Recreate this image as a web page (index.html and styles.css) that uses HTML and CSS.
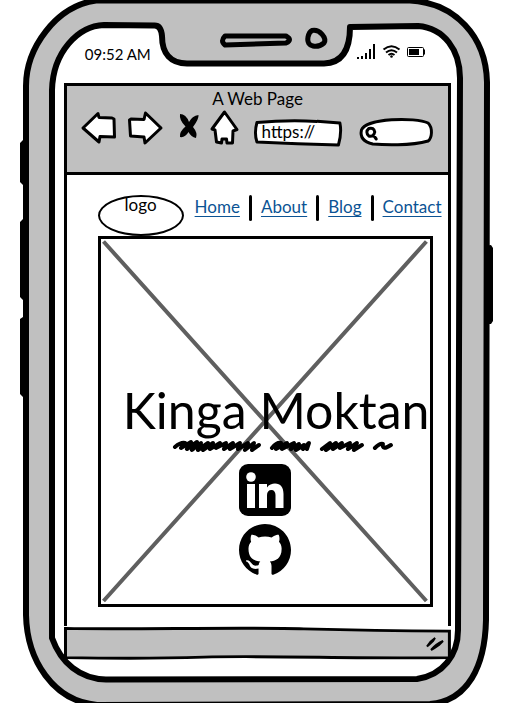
FILE: index.html
```html
<!DOCTYPE html>
<html lang="en">
<head>
<meta charset="utf-8">
<meta name="viewport" content="width=device-width, initial-scale=1">
<title>Kinga Moktan</title>
<link rel="stylesheet" href="styles.css">
</head>
<body>
<div class="phone">
  <svg class="phone-frame" viewBox="0 0 530 703" preserveAspectRatio="none" aria-hidden="true">
    <path class="side-key" d="M20 143l3-3h5v46h-4l-4-4zM20 222l3-3h5v81h-5l-3-3zM20 319l3-2h5v82l-5-2-3-3zM484 246l7-1 2 3v73l-2 3h-7z"/>
    <path class="shell" d="M96 0.500C56 6 26 48 26 86L26 615C27 660 53 701 97 705L430 704C468 701 485 666 486 620L487 82C486 36 455 3 410 0.500Z"/>
    <path class="glass" d="M52 90C53 52 78 26 104 25L154 25.500Q161 25 162 36C162 54 171 63.500 187 63.500L324 63.500C342 63 350 50 350 27L418 26C444 28 460 50 460 78L458 630C458 655 443 675 417 679L106 679.500C80 679 61 663 52 638Z"/>
    <path class="speaker" d="M225 36Q220 41 225 45L286 43Q293 40 286 36Z"/>
    <path class="speaker" d="M312 30.500C320 29 327 38 324 43C318 48 306 48 308 37Q309 32 312 30.500Z"/>
  </svg>

  <header class="status">
    <time class="clock">09:52 AM</time>
    <svg class="status-icons" viewBox="0 0 70 20" aria-label="Signal, Wi-Fi and battery">
      <path class="ink-fill" d="M0 13h2v2H0zM4 12h2v3H4zM8 9h2v6H8zM12 5h2v10h-2zM16 0h2v15h-2z"/>
      <g class="wave"><path d="M26.500 5.500Q34.500 -1 42.500 5.500M29 8.500Q34.500 4 40 8.500M31.500 11Q34.500 8.500 37.500 11"/></g>
      <circle class="ink-fill" cx="34.500" cy="12.500" r="1.300"/>
      <rect class="battery" x="50.500" y="3.500" width="16" height="9" rx="1"/>
      <path class="ink-fill" d="M52 5h10v6H52zM67 5.500h1v5h-1z"/>
    </svg>
  </header>

  <div class="browser">
    <header class="toolbar">
      <p class="page-title">A Web Page</p>
      <div class="controls">
        <button class="tool back" type="button" aria-label="Back">
          <svg viewBox="0 0 34 36"><path class="outline" d="M1 19L16 4.500L17 8.500L30 9L32 10L32.500 28L18 27.500L17 33Z"/></svg>
        </button>
        <button class="tool forward" type="button" aria-label="Forward">
          <svg viewBox="0 0 36 36"><path class="outline" d="M1.500 11L3 10L16 10.500L17.500 4L33 19L17 34L16 28L2.500 27Z"/></svg>
        </button>
        <button class="tool stop" type="button" aria-label="Stop">
          <svg viewBox="0 0 22 36"><path class="ink-fill" d="M4 5Q10 5 13 13Q16 7 22.500 6Q23 10 17 18Q22 24 20 29Q15 28 12.500 23Q9 29 4 28Q3 23 9.500 17.500Q3 11 4 5Z"/></svg>
        </button>
        <button class="tool home" type="button" aria-label="Home">
          <svg viewBox="0 0 30 36"><path class="outline" d="M14.500 3L27 20.500L23 22L22.500 34L17 34L16.500 30L12 30L11.500 34L6.500 33L5 21L2 20Z"/></svg>
        </button>
        <label class="field url-field">
          <svg viewBox="0 0 94 36" preserveAspectRatio="none" aria-hidden="true"><path class="outline" d="M5 13.500Q45 10 89 14Q91 24 87.500 36Q46 35 5 33Q2 24 5 13.500Z"/></svg>
          <input type="text" value="https://" aria-label="Address">
        </label>
        <label class="field search-field">
          <svg viewBox="0 0 78 36" preserveAspectRatio="none" aria-hidden="true"><path class="outline" d="M5.500 21C10 9 60 8 73 14C78 19 77 29 73 32C55 37 28 36 17 35C8 33 4 28 5.500 21Z"/><path class="lens" d="M13 19.500Q18 18 19 23Q18 28 13 27Q9 23 13 19.500M17.500 26L20.500 30"/></svg>
          <input type="search" aria-label="Search">
        </label>
      </div>
    </header>

    <main class="page">
      <nav class="site-nav">
        <a class="logo" href="#">logo</a>
        <ul class="links">
          <li><a href="#">Home</a></li>
          <li><a href="#">About</a></li>
          <li><a href="#">Blog</a></li>
          <li><a href="#">Contact</a></li>
        </ul>
      </nav>
      <section class="hero">
        <svg class="cross" viewBox="0 0 329 365" preserveAspectRatio="none" aria-hidden="true"><path d="M2.500 2.500L325.500 362M325.500 2.500L2.500 362"/></svg>
        <h1>Kinga Moktan</h1>
        <svg class="scribble" viewBox="0 0 329 18" aria-hidden="true">
          <path d="M74 9Q80 4 84 5L80 10L90 4L86 11L96 4L91 12L100 5L97 12L107 5L102 12L112 5L109 11L119 5L115 10L125 5L123 11L132 5L129 11L139 5L137 11L147 5L144 12L153 5L151 12L158 7M171 10Q176 4 180 5L175 11L186 5L181 11L193 5L190 11L198 6L195 12L203 7L202 11L208 5L206 11M221 11L229 5L225 12L235 5L232 11L241 5L239 10L249 5L247 11L256 5L253 12L261 7M274 10Q279 5 282 6Q281 13 290 7"/>
        </svg>
        <a class="social" href="#" aria-label="LinkedIn">
          <svg viewBox="0 0 52 52"><rect class="ink-fill" width="52" height="52" rx="9"/><circle class="paper" cx="12" cy="13" r="4.800"/><path class="paper" d="M8 20h8v24H8zM20 20h8v3.500C30 20.500 33 19.500 36 19.500C41.500 19.500 44.500 23.500 44.500 30V44H36.500V31C36.500 28 35 26 32.500 26C29.500 26 28 28 28 31V44H20z"/></svg>
        </a>
        <a class="social" href="#" aria-label="GitHub">
          <svg viewBox="0 0 16 16"><path class="ink-fill" d="M8 0C3.580 0 0 3.580 0 8c0 3.540 2.290 6.530 5.470 7.590.4.070.55-.17.55-.38 0-.19-.01-.82-.01-1.490-2.010.37-2.530-.49-2.690-.94-.09-.23-.48-.94-.82-1.130-.28-.15-.68-.52-.01-.53.63-.01 1.080.58 1.230.82.72 1.210 1.870.87 2.330.66.070-.52.28-.87.51-1.070-1.780-.2-3.640-.89-3.640-3.950 0-.87.31-1.590.82-2.150-.08-.2-.36-1.020.08-2.120 0 0 .67-.21 2.200.82.64-.18 1.320-.27 2-.27s1.360.09 2 .27c1.530-1.040 2.200-.82 2.200-.82.44 1.100.16 1.920.08 2.120.51.56.82 1.270.82 2.150 0 3.070-1.870 3.750-3.650 3.950.29.25.54.73.54 1.480 0 1.070-.01 1.930-.01 2.200 0 .21.15.46.55.38A8.010 8.010 0 0 0 16 8c0-4.420-3.580-8-8-8z"/></svg>
        </a>
      </section>
    </main>

    <footer class="bottom-bar">
      <svg class="bar-shape" viewBox="0 0 387 36" preserveAspectRatio="none" aria-hidden="true"><path d="M1.500 2.500C60 4 180 1 240 3Q310 5 385.500 5.500V33.500C300 35 200 31 140 33Q80 35 1.500 33.500Z"/></svg>
      <svg class="grip" viewBox="0 0 20 16" aria-hidden="true"><path d="M2 10.500Q5 5 10 2L8 5Q5 8 2 10.500M6 14Q11 8 18 5L14 9Q10 12 6 14"/></svg>
    </footer>
  </div>
</div>
</body>
</html>
```
FILE: styles.css
```css
* { box-sizing: border-box; }

body {
  margin: 0;
  background: #fff;
  color: #000;
  font-family: Lato, "Noto Sans", sans-serif;
  font-size: 17px;
  line-height: 20px;
  overflow-x: hidden;
}

svg { display: block; overflow: visible; }
.ink-fill { fill: #000; }
.paper { fill: #fff; }
.outline { fill: #fff; stroke: #000; stroke-width: 3; stroke-linejoin: round; }

.phone {
  position: relative;
  max-width: 530px;
  padding-bottom: 43px;
  overflow: hidden;
}
.phone-frame {
  position: absolute;
  inset: 0;
  width: 100%;
  height: 100%;
  z-index: -1;
}
.shell { fill: #c0c0c0; stroke: #000; stroke-width: 6; }
.glass { fill: #fff; stroke: #000; stroke-width: 6; stroke-linejoin: round; }
.side-key { fill: #000; }
.speaker { fill: #c0c0c0; stroke: #000; stroke-width: 5; stroke-linejoin: round; }

.status {
  display: flex;
  justify-content: space-between;
  align-items: flex-start;
  height: 83px;
  padding: 44px 103px 0 16%;
}
.clock { font-size: 15px; }
.status-icons { width: 70px; height: 20px; }
.wave { fill: none; stroke: #000; stroke-width: 2; }
.battery { fill: none; stroke: #000; }

.browser { margin: 0 15% 0 12%; }

.toolbar {
  height: 92px;
  padding: 3px 14px 0 15px;
  background: #c0c0c0;
  border: 3px solid #000;
}
.page-title { margin: 0; text-align: center; }
.controls { display: flex; gap: 12px; }
.tool {
  height: 36px;
  padding: 0;
  border: 0;
  background: none;
}
.tool svg { width: 100%; height: 36px; }
.back { width: 34px; }
.forward { width: 36px; }
.stop { width: 22px; }
.home { width: 30px; }
.field { position: relative; height: 36px; }
.field svg { position: absolute; inset: 0; width: 100%; height: 100%; }
.field input {
  position: relative;
  width: 100%;
  height: 36px;
  padding: 8px 8px 0 10px;
  border: 0;
  outline: 0;
  background: none;
  font: inherit;
  appearance: none;
}
.url-field { flex: 94 1 0; }
.search-field { flex: 78 1 0; }
.search-field input { padding-left: 24px; }
.lens { fill: none; stroke: #000; stroke-width: 3; stroke-linecap: round; }

.page {
  padding: 20px 4px 19px 31px;
  border: solid #000;
  border-width: 0 3px;
}
.site-nav { display: flex; gap: 11px; padding-right: 2px; }
.logo {
  width: 86px;
  height: 41px;
  border: 2px solid #000;
  border-radius: 50%;
  color: #000;
  line-height: 15px;
  text-align: center;
  text-decoration: none;
}
.links {
  display: flex;
  flex: 1;
  justify-content: space-between;
  margin: 0;
  padding: 0;
  list-style: none;
}
.links li { display: flex; flex: auto; }
.links li:last-child { flex: none; }
.links a { color: #0b5394; line-height: 24px; text-underline-offset: 3px; }
.links li:not(:last-child)::after {
  content: "";
  width: 3px;
  height: 26px;
  margin: 0 auto;
  border-radius: 2px;
  background: #000;
}

.hero {
  position: relative;
  display: flex;
  flex-direction: column;
  align-items: center;
  margin-right: 11px;
  padding: 143px 0 28px;
  border: 3px solid #000;
}
.cross { position: absolute; inset: 0; width: 100%; height: 100%; z-index: -1; }
.cross path { stroke: #5f5f5f; stroke-width: 4; }
.hero h1 {
  align-self: flex-end;
  margin: 0;
  font-size: 50px;
  font-weight: 400;
  line-height: 56px;
  white-space: nowrap;
}
.scribble { width: 100%; height: 18px; }
.scribble path { fill: none; stroke: #000; stroke-width: 4; stroke-linecap: round; stroke-linejoin: round; }
.social { width: 52px; margin-top: 8px; }
.social svg { width: 52px; height: 52px; }

.bottom-bar {
  position: relative;
  display: flex;
  justify-content: flex-end;
  height: 34px;
  padding: 10px 6px 0;
}
.bar-shape { position: absolute; inset: 0; width: 100%; height: 100%; }
.bar-shape path { fill: #c0c0c0; stroke: #000; stroke-width: 3; }
.grip { position: relative; width: 20px; height: 16px; }
.grip path { fill: #000; stroke: #000; stroke-width: 2; }
```
